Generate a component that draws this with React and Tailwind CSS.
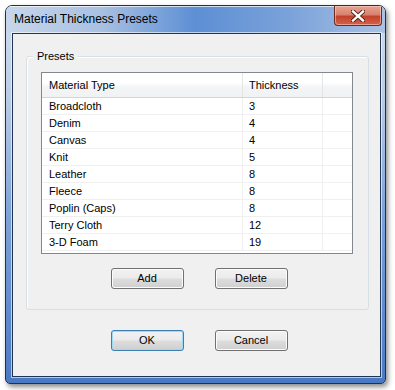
import React from "react";

const rows = [
  { name: "Broadcloth", value: "3" },
  { name: "Denim", value: "4" },
  { name: "Canvas", value: "4" },
  { name: "Knit", value: "5" },
  { name: "Leather", value: "8" },
  { name: "Fleece", value: "8" },
  { name: "Poplin (Caps)", value: "8" },
  { name: "Terry Cloth", value: "12" },
  { name: "3-D Foam", value: "19" },
];

function WinButton({ label, focused }) {
  return (
    <button
      className={
        "w-[73px] h-[21px] rounded-[3px] border text-[11px] leading-none text-black bg-[linear-gradient(to_bottom,#f2f2f2_0%,#ebebeb_48%,#dddddd_52%,#cfcfcf_100%)] " +
        (focused
          ? "border-[#3c7fb1] shadow-[inset_0_0_0_1px_#9fdaf4]"
          : "border-[#707070] shadow-[inset_0_0_0_1px_#fbfbfb]")
      }
    >
      {label}
    </button>
  );
}

function CloseButton() {
  return (
    <div className="w-[48px] h-[20px] mr-[3px] rounded-b-[4px] border border-t-0 border-[#6b2a22] bg-[linear-gradient(to_bottom,#e8a493_0%,#d9826e_45%,#c2422c_55%,#d2634b_100%)] shadow-[inset_0_0_0_1px_rgba(255,220,210,0.5)] flex items-center justify-center">
      <svg width="14" height="12" viewBox="0 0 14 12">
        <path
          d="M2 1.5 L12 10.5 M12 1.5 L2 10.5"
          stroke="#4a1a14"
          strokeWidth="4.2"
          strokeLinecap="square"
        />
        <path
          d="M2 1.5 L12 10.5 M12 1.5 L2 10.5"
          stroke="#ffffff"
          strokeWidth="2.4"
          strokeLinecap="square"
        />
      </svg>
    </div>
  );
}

export default function App() {
  return (
    <div className="w-[395px] h-[390px] bg-white pt-[5px] pl-[5px] font-['Liberation_Sans',Arial,sans-serif]">
      <div className="w-[381px] h-[379px] rounded-t-[7px] rounded-b-[5px] border border-[#2a2f38] shadow-[2px_3px_5px_rgba(0,0,0,0.45)] bg-[linear-gradient(to_bottom,#d3deee_0%,#b9cbe5_25%,#7ea3d8_55%,#4a79c4_100%)] flex flex-col overflow-hidden">
        <div className="h-[27px] flex justify-between bg-[linear-gradient(to_right,#c7d6ea_0%,#a9c0e2_25%,#5d8fd4_50%,#7ba2da_75%,#a9c2e4_100%)] shadow-[inset_0_1px_0_rgba(255,255,255,0.7)]">
          <div className="pl-[8px] pt-[7px] text-[12px] text-black leading-none">
            Material Thickness Presets
          </div>
          <CloseButton />
        </div>
        <div className="flex-1 ml-[6px] mr-[4px] mb-[6px] border border-[#1f3553] bg-[#f0f0f0] shadow-[0_0_0_1px_rgba(255,255,255,0.6)] flex flex-col text-[11px] text-black">
          <div className="relative mt-[22px] ml-[13px] mr-[11px] h-[254px] rounded-[3px] border border-[#d5dfe5] shadow-[inset_1px_1px_0_#ffffff] flex flex-col">
            <div className="absolute -top-[7px] left-[6px] px-[4px] bg-[#f0f0f0] leading-[13px]">
              Presets
            </div>
            <div className="mt-[15px] ml-[14px] mr-[15px] h-[182px] border border-[#828790] bg-white flex flex-col">
              <div className="h-[25px] flex border-b border-[#d5d5d5] bg-[linear-gradient(to_bottom,#ffffff_0%,#ffffff_40%,#f3f4f6_60%,#f1f2f4_100%)]">
                <div className="w-[201px] pl-[7px] flex items-center border-r border-[#e5e5e5]">
                  Material Type
                </div>
                <div className="w-[80px] pl-[6px] flex items-center border-r border-[#e5e5e5]">
                  Thickness
                </div>
                <div className="flex-1" />
              </div>
              {rows.map((r) => (
                <div key={r.name} className="h-[17px] flex border-b border-[#f0f0f0]">
                  <div className="w-[201px] pl-[7px] flex items-center border-r border-[#f0f0f0]">
                    {r.name}
                  </div>
                  <div className="w-[80px] pl-[6px] flex items-center border-r border-[#f0f0f0]">
                    {r.value}
                  </div>
                  <div className="flex-1" />
                </div>
              ))}
            </div>
            <div className="mt-[14px] flex justify-center gap-[31px] pl-[3px]">
              <WinButton label="Add" />
              <WinButton label="Delete" />
            </div>
          </div>
          <div className="mt-[20px] flex justify-center gap-[31px] pl-[5px]">
            <WinButton label="OK" focused />
            <WinButton label="Cancel" />
          </div>
        </div>
      </div>
    </div>
  );
}
